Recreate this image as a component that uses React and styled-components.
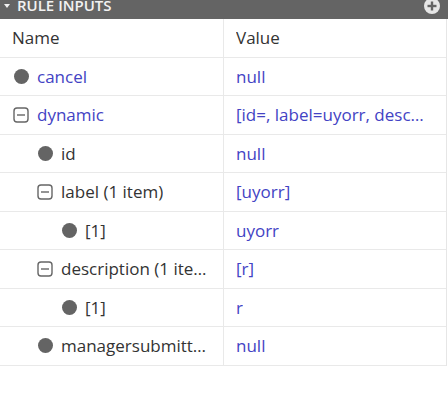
import React from "react";
import styled, { createGlobalStyle } from "styled-components";

const Global = createGlobalStyle`
  html, body { margin: 0; padding: 0; background: #ffffff; }
  body { font-family: "Open Sans", "Noto Sans", sans-serif; }
`;

const Panel = styled.div`
  width: 448px;
  height: 394px;
  background: #ffffff;
  overflow: hidden;
`;

const Bar = styled.div`
  height: 19px;
  background: #646464;
  display: flex;
  align-items: flex-start;
  justify-content: space-between;
  overflow: hidden;
  padding: 0 8px 0 4px;
`;

const BarTitle = styled.div`
  display: flex;
  align-items: center;
  gap: 7px;
  margin-top: -5px;
  color: #f2f2f2;
  font-size: 15px;
  font-weight: 600;
  line-height: 20px;
  text-transform: uppercase;
`;

const Caret = styled.span`
  width: 0;
  height: 0;
  border-left: 3.5px solid transparent;
  border-right: 3.5px solid transparent;
  border-top: 4px solid #f2f2f2;
  margin-top: 2px;
`;

const AddIcon = styled.svg`
  margin-top: -2px;
  flex: none;
`;

const Table = styled.div`
  width: 447px;
  border-right: 1px solid #e6e6e6;
  box-sizing: border-box;
`;

const Row = styled.div`
  display: grid;
  grid-template-columns: 224px 1fr;
  height: 38.5px;
  border-bottom: 1px solid #e9e9e9;
  box-sizing: border-box;
`;

const Cell = styled.div`
  display: flex;
  align-items: center;
  gap: 8px;
  min-width: 0;
  box-sizing: border-box;
  padding: 0 ${(p) => p.$padRight}px 0 ${(p) => p.$pad}px;
  border-right: ${(p) => (p.$divider ? "1px solid #e9e9e9" : "none")};
  font-size: 17px;
  color: ${(p) => p.$color};
`;

const Text = styled.span`
  white-space: nowrap;
  overflow: hidden;
  text-overflow: ellipsis;
  min-width: 0;
`;

const IconSlot = styled.span`
  width: 16px;
  height: 16px;
  flex: none;
  display: flex;
  align-items: center;
  justify-content: center;
`;

const Dot = styled.span`
  width: 15px;
  height: 15px;
  border-radius: 50%;
  background: #646464;
`;

const Collapse = () => (
  <svg width="16" height="16" viewBox="0 0 16 16">
    <rect x="1" y="1" width="14" height="14" rx="3" fill="none" stroke="#666" strokeWidth="1.4" />
    <line x1="4" y1="8" x2="12" y2="8" stroke="#666" strokeWidth="1.4" />
  </svg>
);

const BLUE = "#4343c4";
const DARK = "#333333";

const rows = [
  { name: "cancel", value: "null", level: 0, group: false },
  { name: "dynamic", value: "[id=, label=uyorr, description=r, managersubmitted=]", level: 0, group: true },
  { name: "id", value: "null", level: 1, group: false },
  { name: "label (1 item)", value: "[uyorr]", level: 1, group: true },
  { name: "[1]", value: "uyorr", level: 2, group: false },
  { name: "description (1 item)", value: "[r]", level: 1, group: true },
  { name: "[1]", value: "r", level: 2, group: false },
  { name: "managersubmitted", value: "null", level: 1, group: false },
];

export default function App() {
  return (
    <Panel>
      <Global />
      <Bar>
        <BarTitle>
          <Caret />
          Rule Inputs
        </BarTitle>
        <AddIcon width="16" height="16" viewBox="0 0 16 16">
          <circle cx="8" cy="8" r="8" fill="#e6e6e6" />
          <rect x="6.8" y="3.5" width="2.4" height="9" fill="#646464" />
          <rect x="3.5" y="6.8" width="9" height="2.4" fill="#646464" />
        </AddIcon>
      </Bar>
      <Table>
        <Row>
          <Cell $pad={12} $padRight={12} $divider $color={DARK}>
            <Text>Name</Text>
          </Cell>
          <Cell $pad={12} $padRight={18} $color={DARK}>
            <Text>Value</Text>
          </Cell>
        </Row>
        {rows.map((r, i) => (
          <Row key={i}>
            <Cell $pad={13 + r.level * 24} $padRight={12} $divider $color={r.level === 0 ? BLUE : DARK}>
              <IconSlot>{r.group ? <Collapse /> : <Dot />}</IconSlot>
              <Text>{r.name}</Text>
            </Cell>
            <Cell $pad={12} $padRight={18} $color={BLUE}>
              <Text>{r.value}</Text>
            </Cell>
          </Row>
        ))}
      </Table>
    </Panel>
  );
}
